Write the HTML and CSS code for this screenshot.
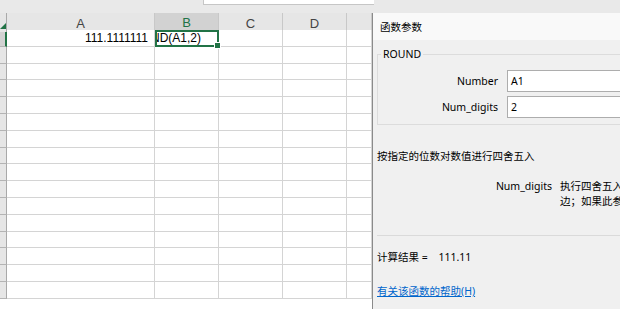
FILE: index.html
```html
<!DOCTYPE html>
<html lang="zh-CN">
<head>
  <meta charset="UTF-8">
  <meta name="viewport" content="width=device-width, initial-scale=1.0">
  <title>函数参数</title>
  <link rel="stylesheet" href="styles.css">
</head>
<body>
  <div class="topbar"><div class="formula"></div></div>
  <div class="main">
    <div class="sheet">
      <div class="row head">
        <div class="rh corner"></div>
        <div class="ch">A</div>
        <div class="ch active">B</div>
        <div class="ch">C</div>
        <div class="ch">D</div>
        <div class="ch"></div>
      </div>
      <div class="row">
        <div class="rh active"></div>
        <div class="cell num">111.1111111</div>
        <div class="cell editing"><span class="clip">=ROUND(A1,2)</span></div>
        <div class="cell"></div><div class="cell"></div><div class="cell"></div>
      </div>
      <div class="row"><div class="rh"></div><div class="cell"></div><div class="cell"></div><div class="cell"></div><div class="cell"></div><div class="cell"></div></div>
      <div class="row"><div class="rh"></div><div class="cell"></div><div class="cell"></div><div class="cell"></div><div class="cell"></div><div class="cell"></div></div>
      <div class="row"><div class="rh"></div><div class="cell"></div><div class="cell"></div><div class="cell"></div><div class="cell"></div><div class="cell"></div></div>
      <div class="row"><div class="rh"></div><div class="cell"></div><div class="cell"></div><div class="cell"></div><div class="cell"></div><div class="cell"></div></div>
      <div class="row"><div class="rh"></div><div class="cell"></div><div class="cell"></div><div class="cell"></div><div class="cell"></div><div class="cell"></div></div>
      <div class="row"><div class="rh"></div><div class="cell"></div><div class="cell"></div><div class="cell"></div><div class="cell"></div><div class="cell"></div></div>
      <div class="row"><div class="rh"></div><div class="cell"></div><div class="cell"></div><div class="cell"></div><div class="cell"></div><div class="cell"></div></div>
      <div class="row"><div class="rh"></div><div class="cell"></div><div class="cell"></div><div class="cell"></div><div class="cell"></div><div class="cell"></div></div>
      <div class="row"><div class="rh"></div><div class="cell"></div><div class="cell"></div><div class="cell"></div><div class="cell"></div><div class="cell"></div></div>
      <div class="row"><div class="rh"></div><div class="cell"></div><div class="cell"></div><div class="cell"></div><div class="cell"></div><div class="cell"></div></div>
      <div class="row"><div class="rh"></div><div class="cell"></div><div class="cell"></div><div class="cell"></div><div class="cell"></div><div class="cell"></div></div>
      <div class="row"><div class="rh"></div><div class="cell"></div><div class="cell"></div><div class="cell"></div><div class="cell"></div><div class="cell"></div></div>
      <div class="row"><div class="rh"></div><div class="cell"></div><div class="cell"></div><div class="cell"></div><div class="cell"></div><div class="cell"></div></div>
      <div class="row"><div class="rh"></div><div class="cell"></div><div class="cell"></div><div class="cell"></div><div class="cell"></div><div class="cell"></div></div>
      <div class="row"><div class="rh"></div><div class="cell"></div><div class="cell"></div><div class="cell"></div><div class="cell"></div><div class="cell"></div></div>
    </div>

    <div class="dialog">
      <div class="title">函数参数</div>
      <div class="body">
        <fieldset class="group">
          <legend>ROUND</legend>
          <div class="args">
            <label>Number</label>
            <div class="input">A1</div>
            <label>Num_digits</label>
            <div class="input">2</div>
          </div>
        </fieldset>
        <p class="summary">按指定的位数对数值进行四舍五入</p>
        <div class="argdesc">
          <span class="name">Num_digits</span>
          <span class="text">执行四舍五入时采用的位数。如果此参数为负数，则圆整到小数点的左边；如果此参数为零，则圆整到最接近的整数</span>
        </div>
        <div class="sep"></div>
        <div class="result">计算结果 = <span class="value">111.11</span></div>
        <a class="help" href="#">有关该函数的帮助(H)</a>
      </div>
    </div>
  </div>
</body>
</html>
```

FILE: styles.css
```css
html, body {
  margin: 0;
  width: 620px;
  height: 309px;
  overflow: hidden;
  background: #ffffff;
}
body {
  font-family: "Liberation Sans", "Noto Sans CJK SC", sans-serif;
}
.topbar {
  height: 13px;
  background: #e9e9e9;
  display: flex;
}
.formula {
  margin-left: 203px;
  width: 170px;
  height: 4px;
  background: #ffffff;
  border-left: 1px solid #c6c6c6;
  border-bottom: 1px solid #c6c6c6;
}
.main {
  display: flex;
  align-items: flex-start;
}

/* sheet */
.sheet {
  width: 372px;
  flex: none;
}
.row {
  display: grid;
  grid-template-columns: 7px 148px 64px 64px 64px 1fr;
  height: 16.8px;
}
.row.head {
  height: 17px;
  background: #e6e6e6;
}
.rh {
  background: #e6e6e6;
  border-right: 1px solid #a9a9a9;
  border-bottom: 1px solid #b4b4b4;
  box-sizing: border-box;
}
.rh.active {
  background: #d2d2d2;
  border-right: 2px solid #217346;
}
.rh.corner {
  border-bottom: none;
  position: relative;
}
.rh.corner::after {
  content: "";
  position: absolute;
  right: 0;
  bottom: 3px;
  border-left: 6px solid transparent;
  border-bottom: 6px solid #217346;
}
.ch {
  border-right: 1px solid #c8c8c8;
  box-sizing: border-box;
  display: flex;
  align-items: center;
  justify-content: center;
  font-size: 13px;
  color: #444444;
  padding-top: 2px;
}
.ch.active {
  background: #d2d2d2;
  color: #217346;
  border-bottom: 2px solid #217346;
}
.cell {
  border-right: 1px solid #d4d4d4;
  border-bottom: 1px solid #d4d4d4;
  box-sizing: border-box;
  font-size: 12px;
  color: #000000;
  display: flex;
  align-items: center;
  overflow: hidden;
  white-space: nowrap;
}
.cell.num {
  justify-content: flex-end;
  padding-right: 6px;
}
.cell.editing {
  padding-left: 1px;
  outline: 2px solid #217346;
  outline-offset: -2px;
  position: relative;
  overflow: visible;
}
.clip {
  display: flex;
  justify-content: flex-end;
  width: 45px;
  overflow: hidden;
}
.cell.editing::after {
  content: "";
  position: absolute;
  right: -3px;
  bottom: -3px;
  width: 5px;
  height: 5px;
  background: #217346;
  border: 1px solid #ffffff;
}

/* dialog */
.dialog {
  width: 440px;
  flex: none;
  border-left: 1px solid #8a8a8a;
  background: #f0f0f0;
  height: 296px;
  font-family: "Noto Sans", "Noto Sans CJK SC", sans-serif;
  font-size: 10.5px;
  color: #000000;
}
.title {
  height: 27px;
  background: #f9f9f9;
  display: flex;
  align-items: center;
  padding-left: 7px;
}
.body {
  padding: 7px 0 0 4px;
}
.group {
  margin: 0;
  padding: 9px 0 6px 0;
  border: 1px solid #dcdcdc;
  min-width: 0;
}
.group legend {
  margin-left: 3px;
  padding: 0 2px;
  line-height: 14px;
}
.args {
  display: grid;
  grid-template-columns: 120px 1fr;
  column-gap: 9px;
  row-gap: 4px;
}
.args label {
  text-align: right;
  align-self: center;
}
.input {
  height: 22px;
  box-sizing: border-box;
  background: #ffffff;
  border: 1px solid #adadad;
  padding-left: 3px;
  display: flex;
  align-items: center;
}
.summary {
  margin: 24px 0 0 0;
  line-height: 15px;
}
.argdesc {
  margin-top: 15px;
  display: grid;
  grid-template-columns: 175px 327px;
  column-gap: 8px;
  line-height: 15px;
}
.argdesc .name {
  text-align: right;
}
.sep {
  margin-top: 26px;
  height: 1px;
  background: #dadada;
}
.result {
  margin-top: 14px;
  line-height: 15px;
}
.result .value {
  margin-left: 8px;
}
.help {
  display: inline-block;
  margin-top: 19px;
  line-height: 15px;
  color: #0066cc;
}
```
